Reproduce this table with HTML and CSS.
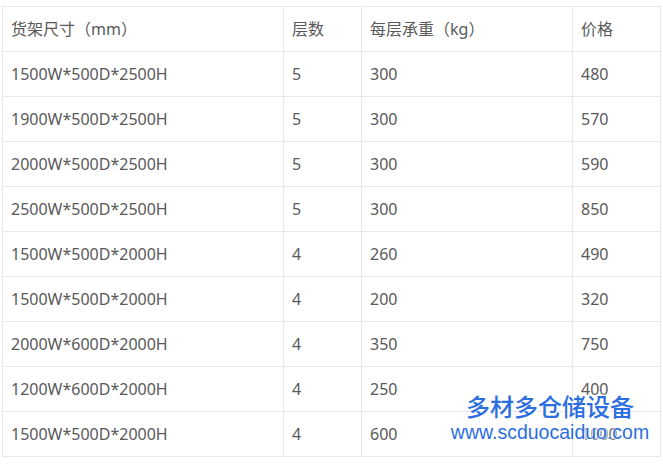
FILE: index.html
```html
<!DOCTYPE html>
<html lang="zh-CN">
<head>
<meta charset="utf-8">
<link rel="stylesheet" href="styles.css">
</head>
<body>
<div class="wrap">
<table class="spec">
<colgroup>
<col class="c1"><col class="c2"><col class="c3"><col class="c4">
</colgroup>
<tr><td>货架尺寸（mm）</td><td>层数</td><td>每层承重（kg）</td><td>价格</td></tr>
<tr><td>1500W*500D*2500H</td><td>5</td><td>300</td><td>480</td></tr>
<tr><td>1900W*500D*2500H</td><td>5</td><td>300</td><td>570</td></tr>
<tr><td>2000W*500D*2500H</td><td>5</td><td>300</td><td>590</td></tr>
<tr><td>2500W*500D*2500H</td><td>5</td><td>300</td><td>850</td></tr>
<tr><td>1500W*500D*2000H</td><td>4</td><td>260</td><td>490</td></tr>
<tr><td>1500W*500D*2000H</td><td>4</td><td>200</td><td>320</td></tr>
<tr><td>2000W*600D*2000H</td><td>4</td><td>350</td><td>750</td></tr>
<tr><td>1200W*600D*2000H</td><td>4</td><td>250</td><td>400</td></tr>
<tr><td>1500W*500D*2000H</td><td>4</td><td>600</td><td>1000</td></tr>
</table>
<div class="mark">
<div class="mark-cn">多材多仓储设备</div>
<div class="mark-url">www.scduocaiduo.com</div>
</div>
</div>
</body>
</html>
```

FILE: styles.css
```css
html, body {
  margin: 0;
  padding: 0;
  background: #fff;
}
.wrap {
  position: relative;
  padding: 6px 3px 0 2px;
  width: 658px;
  height: 460px;
}
.spec {
  border-collapse: collapse;
  table-layout: fixed;
  width: 658px;
  font-family: "Noto Sans", "Noto Sans CJK SC", sans-serif;
  font-size: 16px;
  color: #595959;
}
.c1 { width: 281px; }
.c2 { width: 78px; }
.c3 { width: 211px; }
.c4 { width: 88px; }
.spec td {
  border: 1px solid #e8e8e8;
  height: 45px;
  padding: 0 0 0 8px;
  box-sizing: border-box;
  vertical-align: middle;
  white-space: nowrap;
  line-height: 20px;
}
.mark {
  position: absolute;
  left: 450px;
  top: 391px;
  width: 200px;
  text-align: center;
  color: #2c6ee0;
  text-shadow: 0 0 2px #fff, 0 0 3px #fff, 0 0 4px #fff;
}
.mark-cn {
  font-family: "Noto Sans CJK SC", sans-serif;
  font-size: 24px;
  font-weight: 500;
  line-height: 30px;
}
.mark-url {
  font-family: "Liberation Sans", Arial, sans-serif;
  font-size: 19.5px;
  line-height: 22px;
}
```
